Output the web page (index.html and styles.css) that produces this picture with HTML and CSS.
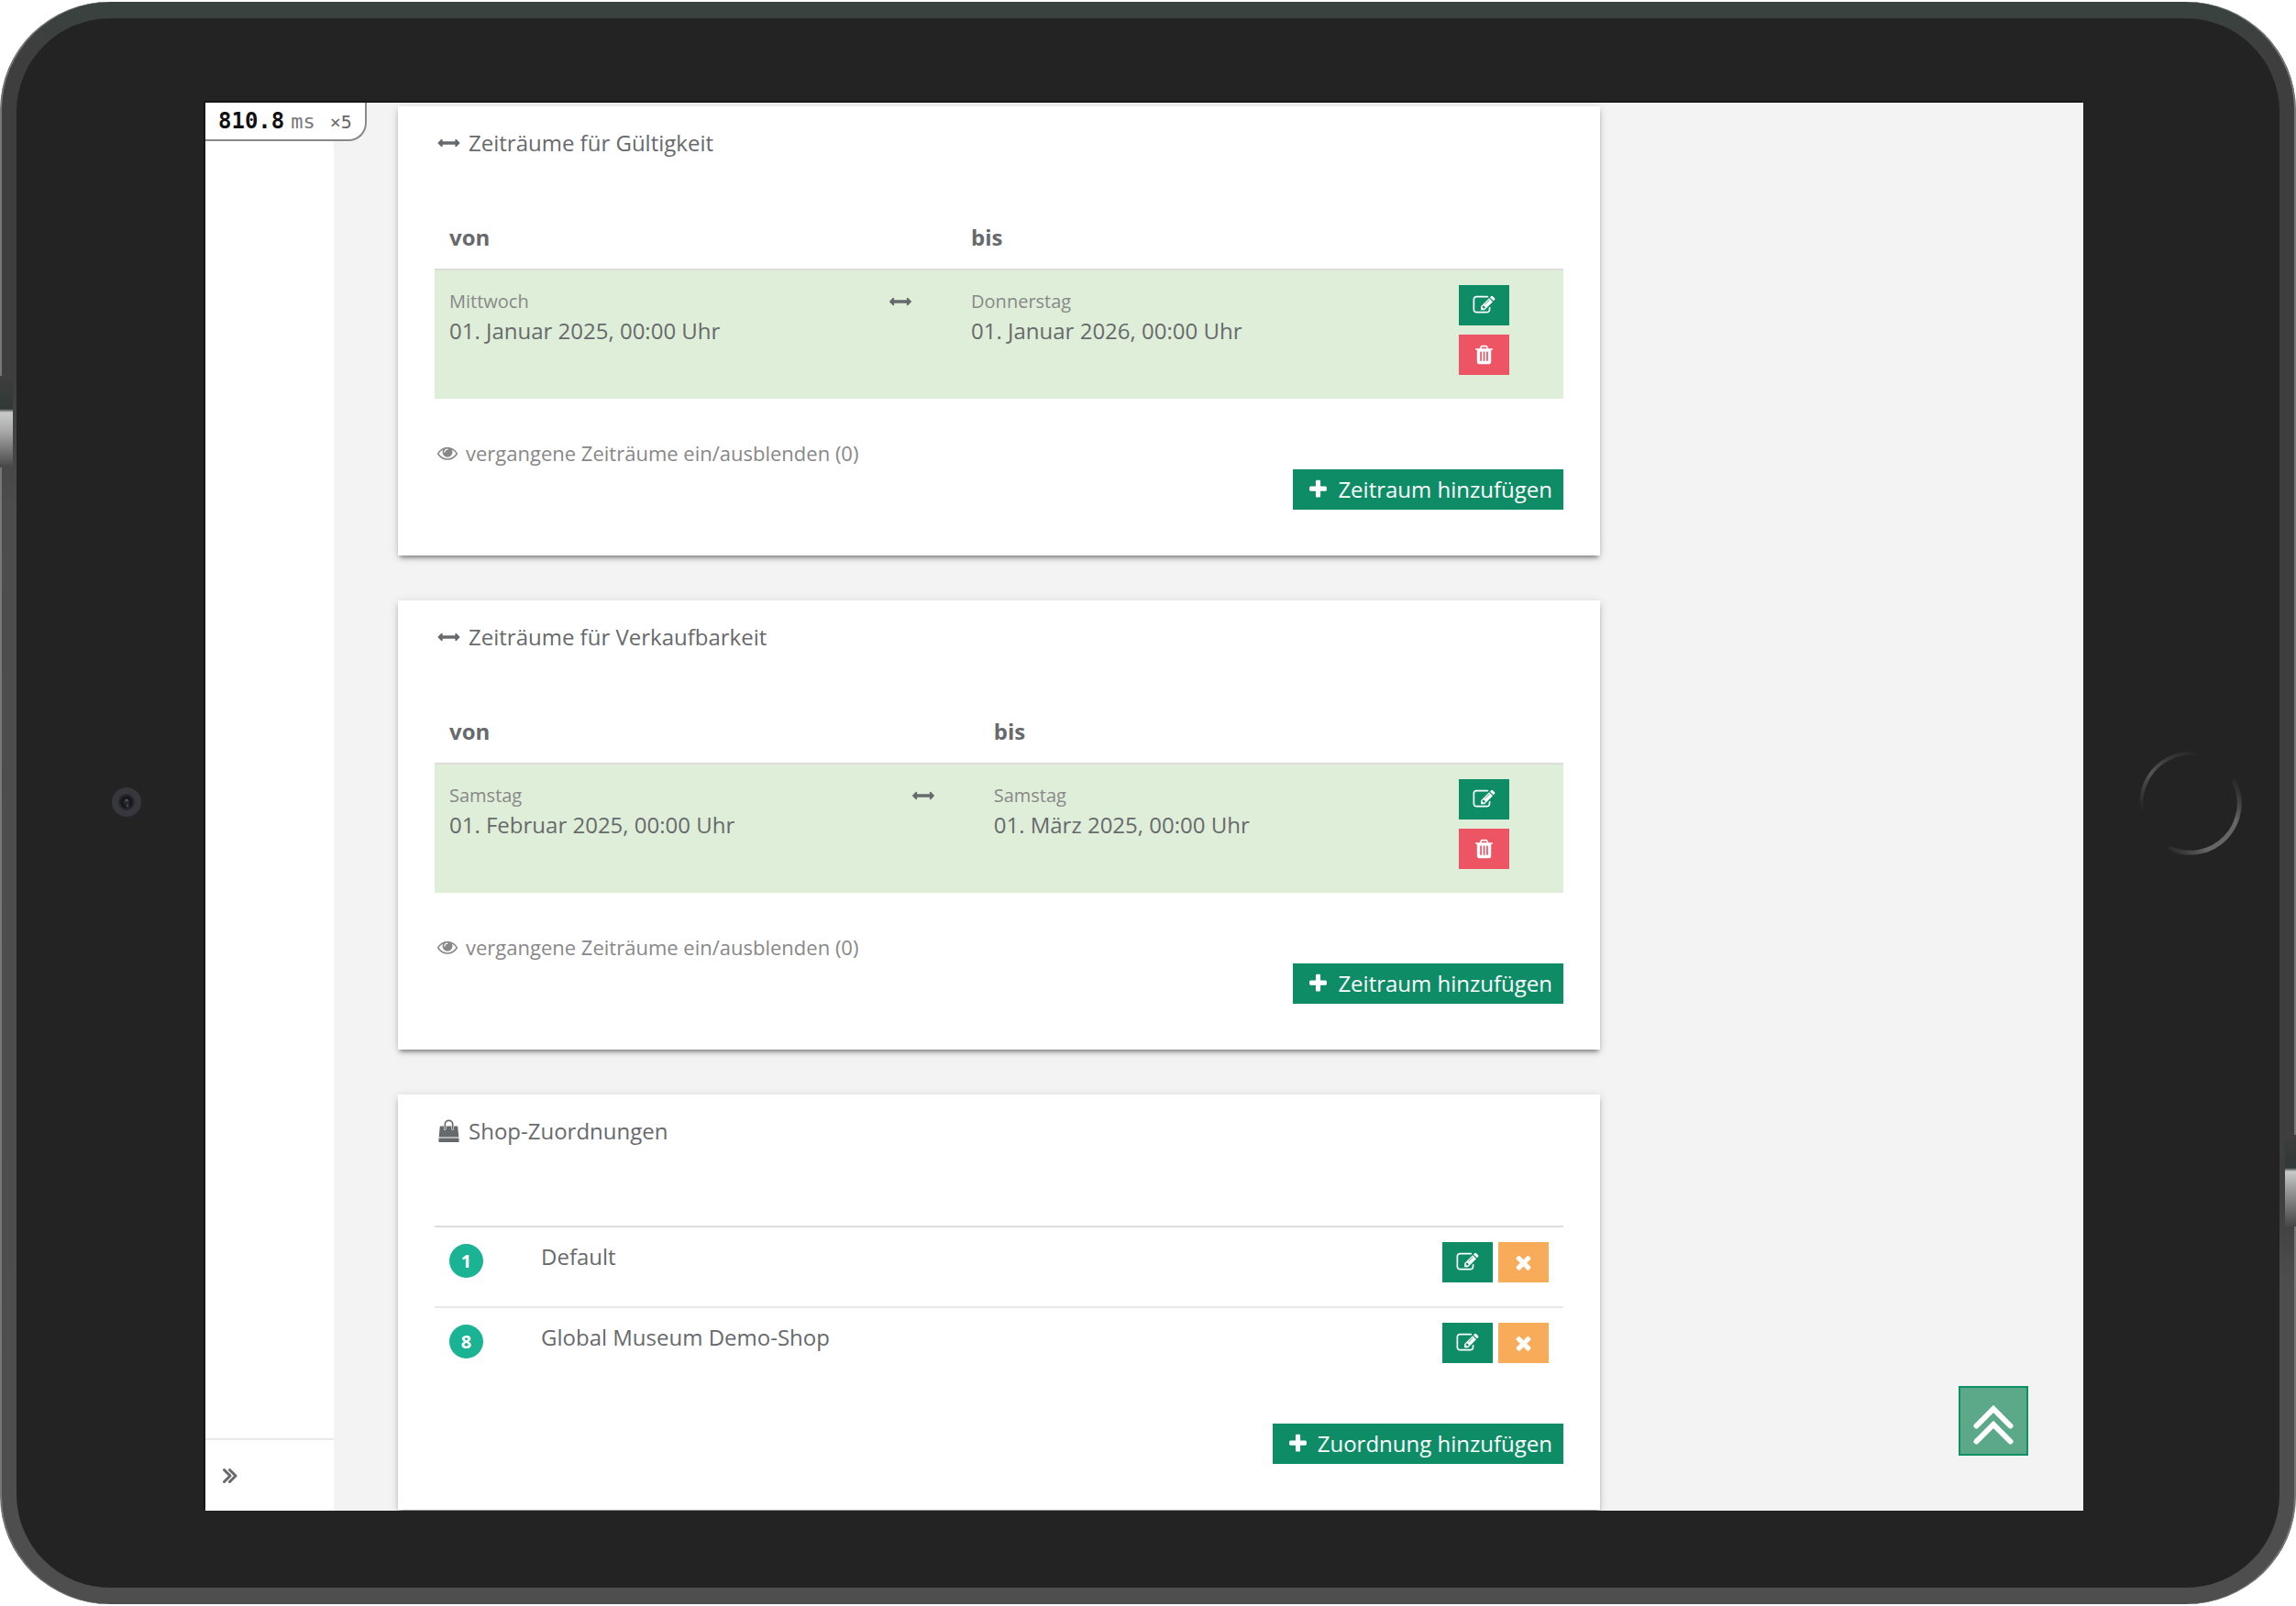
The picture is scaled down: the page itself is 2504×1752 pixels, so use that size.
FILE: index.html
```html
<!DOCTYPE html>
<html lang="de">
<head>
<meta charset="utf-8">
<meta name="viewport" content="width=device-width, initial-scale=1">
<title>Zeiträume und Shop-Zuordnungen</title>
<link rel="stylesheet" href="styles.css">
</head>
<body>
<svg class="sprite" aria-hidden="true">
  <symbol id="i-arrows" viewBox="0 0 1792 1792"><path d="M1792 896q0 26-19 45l-256 256q-19 19-45 19t-45-19-19-45v-128h-1024v128q0 26-19 45t-45 19-45-19l-256-256q-19-19-19-45t19-45l256-256q19-19 45-19t45 19 19 45v128h1024v-128q0-26 19-45t45-19 45 19l256 256q19 19 19 45z"/></symbol>
  <symbol id="i-plus" viewBox="0 0 1792 1792"><path d="M1600 736v192q0 40-28 68t-68 28h-416v416q0 40-28 68t-68 28h-192q-40 0-68-28t-28-68v-416h-416q-40 0-68-28t-28-68v-192q0-40 28-68t68-28h416v-416q0-40 28-68t68-28h192q40 0 68 28t28 68v416h416q40 0 68 28t28 68z"/></symbol>
  <symbol id="i-times" viewBox="0 0 1792 1792"><path d="M1490 1322q0 40-28 68l-136 136q-28 28-68 28t-68-28l-294-294-294 294q-28 28-68 28t-68-28l-136-136q-28-28-28-68t28-68l294-294-294-294q-28-28-28-68t28-68l136-136q28-28 68-28t68 28l294 294 294-294q28-28 68-28t68 28l136 136q28 28 28 68t-28 68l-294 294 294 294q28 28 28 68z"/></symbol>
  <symbol id="i-eye" viewBox="0 0 1792 1792"><path d="M1664 960q-152-236-381-353 61 104 61 225 0 185-131.5 316.5t-316.5 131.5-316.5-131.5-131.5-316.5q0-121 61-225-229 117-381 353 133 205 333.5 326.5t434.5 121.5 434.5-121.5 333.5-326.5zm-720-384q0-20-14-34t-34-14q-125 0-214.5 89.5t-89.5 214.5q0 20 14 34t34 14 34-14 14-34q0-86 61-147t147-61q20 0 34-14t14-34zm848 384q0 34-20 69-140 230-376.5 368.5t-499.5 138.5-499.5-139-376.5-368q-20-35-20-69t20-69q140-229 376.5-368t499.5-139 499.5 139 376.5 368q20 35 20 69z"/></symbol>
  <symbol id="i-trash" viewBox="0 0 1792 1792"><path d="M704 1376v-704q0-14-9-23t-23-9h-64q-14 0-23 9t-9 23v704q0 14 9 23t23 9h64q14 0 23-9t9-23zm256 0v-704q0-14-9-23t-23-9h-64q-14 0-23 9t-9 23v704q0 14 9 23t23 9h64q14 0 23-9t9-23zm256 0v-704q0-14-9-23t-23-9h-64q-14 0-23 9t-9 23v704q0 14 9 23t23 9h64q14 0 23-9t9-23zm-544-992h448l-48-117q-7-9-17-11h-317q-10 2-17 11zm928 32v64q0 14-9 23t-23 9h-96v948q0 83-47 143.5t-113 60.5h-832q-66 0-113-58.5t-47-141.5v-952h-96q-14 0-23-9t-9-23v-64q0-14 9-23t23-9h309l70-167q15-37 54-63t79-26h320q40 0 79 26t54 63l70 167h309q14 0 23 9t9 23z"/></symbol>
  <symbol id="i-edit" viewBox="0 0 1792 1792"><path d="M888 1184l116-116-152-152-116 116v56h96v96h56zm440-720q-16-16-33 1l-350 350q-17 17-1 33t33-1l350-350q17-17 1-33zm80 594v190q0 119-84.5 203.5t-203.5 84.5h-832q-119 0-203.5-84.5t-84.5-203.5v-832q0-119 84.5-203.5t203.5-84.5h832q63 0 117 25 15 7 18 23 3 17-9 29l-49 49q-14 14-32 8-23-6-45-6h-832q-66 0-113 47t-47 113v832q0 66 47 113t113 47h832q66 0 113-47t47-113v-126q0-13 9-22l64-64q15-15 35-7t20 29zm-96-738l288 288-672 672h-288v-288zm444 132l-92 92-288-288 92-92q28-28 68-28t68 28l152 152q28 28 28 68t-28 68z"/></symbol>
  <symbol id="i-bag" viewBox="0 0 24 28"><path d="M1.600 8h4.400v3a2 2 0 0 0 1 1.700a2 2 0 0 0 2-1.700v-3h6v3a2 2 0 0 0 2 1.700a2 2 0 0 0 1-1.700v-3h4.400l1.300 13h-23.400zM.200 22h23.600l.200 4q0 1-1 1h-22q-1 0-1-1z"/><path d="M7.500 11v-5a4.500 4.500 0 0 1 9 0v5" fill="none" stroke="currentColor" stroke-width="1.800" stroke-linecap="round"/></symbol>
</svg>

<div class="device">
  <span class="key key-left"></span>
  <span class="key key-right"></span>
  <div class="bezel">
    <div class="side-left">
      <svg class="camera" viewBox="0 0 36 36" aria-hidden="true">
        <circle cx="19" cy="19" r="16" fill="#24232a"/>
        <circle cx="17" cy="17" r="12.500" fill="#26262c" stroke="#38383c" stroke-width="7"/>
        <circle cx="17" cy="17" r="5" fill="none" stroke="#15151c" stroke-width="3"/>
        <circle cx="17" cy="15" r="1.500" fill="#555560"/><circle cx="18" cy="21" r="1.500" fill="#484852"/>
      </svg>
    </div>

    <div class="screen">
      <div class="timing"><strong>810.8</strong><span class="unit">ms</span><span class="count">×5</span></div>
      <aside class="sidebar">
        <button class="expand" type="button" aria-label="Menü ausklappen">
          <svg class="chevrons" viewBox="0 0 18 18" aria-hidden="true"><path d="M2.500 2.500L9 9l-6.500 6.500M8.500 2.500L15 9l-6.500 6.500"/></svg>
        </button>
      </aside>

      <main class="content">
        <div class="cards">
          <section class="card">
            <h2 class="card-title"><svg class="icon" aria-hidden="true"><use href="#i-arrows"/></svg>Zeiträume für Gültigkeit</h2>
            <table class="periods">
              <colgroup><col class="col-from"><col class="col-arrow"><col><col class="col-actions"></colgroup>
              <thead><tr><th>von</th><th></th><th>bis</th><th></th></tr></thead>
              <tbody>
                <tr>
                  <td><small>Mittwoch</small><br>01. Januar 2025, 00:00 Uhr</td>
                  <td><svg class="span-icon" aria-hidden="true"><use href="#i-arrows"/></svg></td>
                  <td><small>Donnerstag</small><br>01. Januar 2026, 00:00 Uhr</td>
                  <td><div class="actions stacked">
                    <button class="btn" type="button" aria-label="Bearbeiten"><svg class="icon" aria-hidden="true"><use href="#i-edit"/></svg></button>
                    <button class="btn danger" type="button" aria-label="Löschen"><svg class="icon" aria-hidden="true"><use href="#i-trash"/></svg></button>
                  </div></td>
                </tr>
              </tbody>
            </table>
            <a class="toggle" href="#"><svg class="icon" aria-hidden="true"><use href="#i-eye"/></svg>vergangene Zeiträume ein/ausblenden (0)</a>
            <button class="btn add" type="button"><svg class="icon" aria-hidden="true"><use href="#i-plus"/></svg>Zeitraum hinzufügen</button>
          </section>

          <section class="card">
            <h2 class="card-title"><svg class="icon" aria-hidden="true"><use href="#i-arrows"/></svg>Zeiträume für Verkaufbarkeit</h2>
            <table class="periods">
              <colgroup><col class="col-from-wide"><col class="col-arrow"><col><col class="col-actions"></colgroup>
              <thead><tr><th>von</th><th></th><th>bis</th><th></th></tr></thead>
              <tbody>
                <tr>
                  <td><small>Samstag</small><br>01. Februar 2025, 00:00 Uhr</td>
                  <td><svg class="span-icon" aria-hidden="true"><use href="#i-arrows"/></svg></td>
                  <td><small>Samstag</small><br>01. März 2025, 00:00 Uhr</td>
                  <td><div class="actions stacked">
                    <button class="btn" type="button" aria-label="Bearbeiten"><svg class="icon" aria-hidden="true"><use href="#i-edit"/></svg></button>
                    <button class="btn danger" type="button" aria-label="Löschen"><svg class="icon" aria-hidden="true"><use href="#i-trash"/></svg></button>
                  </div></td>
                </tr>
              </tbody>
            </table>
            <a class="toggle" href="#"><svg class="icon" aria-hidden="true"><use href="#i-eye"/></svg>vergangene Zeiträume ein/ausblenden (0)</a>
            <button class="btn add" type="button"><svg class="icon" aria-hidden="true"><use href="#i-plus"/></svg>Zeitraum hinzufügen</button>
          </section>

          <section class="card">
            <h2 class="card-title"><svg class="icon bag" aria-hidden="true"><use href="#i-bag"/></svg>Shop-Zuordnungen</h2>
            <table class="shops">
              <colgroup><col class="col-id"><col><col class="col-shop-actions"></colgroup>
              <tbody>
                <tr>
                  <td><span class="badge">1</span></td>
                  <td>Default</td>
                  <td><div class="actions">
                    <button class="btn" type="button" aria-label="Bearbeiten"><svg class="icon" aria-hidden="true"><use href="#i-edit"/></svg></button>
                    <button class="btn warning" type="button" aria-label="Entfernen"><svg class="icon" aria-hidden="true"><use href="#i-times"/></svg></button>
                  </div></td>
                </tr>
                <tr>
                  <td><span class="badge">8</span></td>
                  <td>Global Museum Demo-Shop</td>
                  <td><div class="actions">
                    <button class="btn" type="button" aria-label="Bearbeiten"><svg class="icon" aria-hidden="true"><use href="#i-edit"/></svg></button>
                    <button class="btn warning" type="button" aria-label="Entfernen"><svg class="icon" aria-hidden="true"><use href="#i-times"/></svg></button>
                  </div></td>
                </tr>
              </tbody>
            </table>
            <button class="btn add" type="button"><svg class="icon" aria-hidden="true"><use href="#i-plus"/></svg>Zuordnung hinzufügen</button>
          </section>
        </div>
      </main>

      <button class="to-top" type="button" aria-label="Nach oben">
        <svg viewBox="0 0 72 72" aria-hidden="true"><path d="M17.500 41.500L36 23l18.500 18.500M17.500 58.500L36 40l18.500 18.500"/></svg>
      </button>
    </div>

    <div class="side-right">
      <svg class="home" viewBox="0 0 112 116" aria-hidden="true">
        <defs>
          <linearGradient id="rim-top" x1="0" y1="1" x2="1" y2="0"><stop offset="0" stop-color="#555" stop-opacity="0"/><stop offset=".4" stop-color="#555"/><stop offset="1" stop-color="#444" stop-opacity="0"/></linearGradient>
          <linearGradient id="rim-bottom" x1="0" y1="1" x2="1" y2="0"><stop offset="0" stop-color="#666" stop-opacity="0"/><stop offset=".3" stop-color="#666"/><stop offset=".7" stop-color="#666"/><stop offset="1" stop-color="#555" stop-opacity="0"/></linearGradient>
        </defs>
        <path d="M3 66A54 54 0 0 1 68 5" fill="none" stroke="url(#rim-top)" stroke-width="4"/>
        <path d="M32 107A54 54 0 0 0 103 33" fill="none" stroke="url(#rim-bottom)" stroke-width="5"/>
      </svg>
    </div>
  </div>
</div>
</body>
</html>
```
FILE: styles.css
```css
* { box-sizing: border-box; }

body {
  margin: 0;
  background: #fff;
  color: #676a6c;
  font: 24px/32px "Open Sans", "Noto Sans", sans-serif;
}

.sprite { position: absolute; width: 0; height: 0; }

/* Tablet body: the right rim stays dark further down than the left one */
.device {
  position: relative;
  display: flex;
  min-height: 100vh;
  padding: 18px;
  border: solid transparent;
  border-width: 2px 0;
  border-radius: 120px;
  background:
    linear-gradient(#3a423f 18px, #3e3e3e 60px, #3e3e3e 75%, #4e4e4e 80%) right / 20px 100% no-repeat padding-box,
    linear-gradient(#3a423f 18px, #3e3e3e 60px, #3e3e3e 24%, #4d4d4d 32%, #4e4e4e) padding-box;
  box-shadow: inset 2px 0 0 #777, inset -2px 0 0 #777;
  overflow: hidden;
}

.bezel {
  flex: 1;
  display: grid;
  grid-template-columns: 206px minmax(0, 1fr) 214px;
  border-radius: 102px;
  background: #232323;
}

.side-left, .side-right { display: flex; align-items: center; }
.side-left { justify-content: center; padding-left: 36px; }
.side-right { justify-content: center; padding-left: 20px; }
.camera { width: 36px; height: 36px; }
.home { width: 112px; height: 116px; }

.key { position: absolute; width: 14px; height: 100px; }
.key-left { left: 0; top: 408px; background: linear-gradient(#3e3e3e, #303836 36px, #c8caca 40px, #aaa 60px, #464646); }
.key-right { right: 0; top: 1236px; width: 12px; background: linear-gradient(#3e3e3e, #303836 36px, #c8caca 40px, #999 60px, #464646); }

.screen {
  position: relative;
  display: flex;
  margin: 92px 0 84px;
  background: #f3f3f3;
  box-shadow: -2px -2px 0 #161616;
}

.timing {
  position: absolute;
  z-index: 2;
  top: 0;
  left: 0;
  display: flex;
  align-items: baseline;
  height: 42px;
  padding: 4px 14px;
  border: solid #888;
  border-width: 0 2px 2px 0;
  border-radius: 0 0 20px 0;
  background: #fff;
  color: #777;
  font: 22px/32px "DejaVu Sans Mono", monospace;
}
.timing strong { color: #111; font-size: 24px; }
.timing .unit { margin-left: 7px; }
.timing .count { margin-left: 16px; color: #666; font-size: 20px; }

.sidebar {
  display: flex;
  flex-direction: column;
  justify-content: flex-end;
  flex: 0 0 140px;
  background: #fff;
}
.expand {
  display: flex;
  align-items: center;
  height: 79px;
  padding: 0 18px;
  border: 0;
  border-top: 2px solid #e7eaec;
  background: none;
}
.chevrons { width: 18px; height: 18px; }
.chevrons path { fill: none; stroke: #676a6c; stroke-width: 3; stroke-linecap: round; stroke-linejoin: round; }

.content {
  flex: 1;
  display: grid;
  grid-template-columns: minmax(0, 3fr) minmax(0, 1fr);
  min-width: 0;
  padding: 4px 90px 0 70px;
  overflow: hidden;
}
.cards { display: flex; flex-direction: column; gap: 49px; }

.card {
  display: flex;
  flex-direction: column;
  padding: 22px 40px 50px;
  background: #fff;
  box-shadow: 0 4px 5px -2px rgba(0, 0, 0, .45), 0 2px 10px rgba(0, 0, 0, .14);
}

.card-title {
  display: flex;
  align-items: center;
  gap: 6px;
  margin: 0 0 53px;
  font-size: 24px;
  line-height: 36px;
  font-weight: 400;
}

.icon { flex: none; width: 31px; height: 24px; fill: currentColor; }
.icon.bag { height: 26px; }

table { width: 100%; table-layout: fixed; border-spacing: 0; }
th, td { padding: 16px; text-align: left; vertical-align: top; }
th { padding-bottom: 18px; border-bottom: 2px solid #ddd; font-weight: 700; }
small { font-size: 20px; color: #888; }

.col-from { width: 39%; }
.col-from-wide { width: 41%; }
.col-arrow { width: 89px; }
.col-actions { width: 130px; }
.col-id { width: 100px; }
.col-shop-actions { width: 148px; }

.periods { margin-bottom: 43px; }
.periods tbody td { background: #dfeed8; }
.span-icon { display: block; width: 24px; height: 24px; margin-top: 6px; fill: currentColor; }

.shops { margin: 32px 0 40px; }
.shops td { border-top: 2px solid #e7eaec; }
.shops tr:first-child td { border-top-color: #ddd; }

.badge {
  display: flex;
  align-items: center;
  justify-content: center;
  width: 37px;
  height: 37px;
  margin-top: 2px;
  border-radius: 50%;
  background: #1ab394;
  color: #fff;
  font-size: 20px;
  font-weight: 700;
}

.actions { display: flex; gap: 6px; padding-bottom: 10px; }
.actions.stacked { flex-direction: column; align-items: flex-start; gap: 10px; }

.btn {
  display: flex;
  align-items: center;
  gap: 6px;
  height: 44px;
  padding: 0 12px;
  border: 0;
  border-radius: 0;
  background: #0e8c66;
  color: #fff;
  font: inherit;
}
.btn.danger { background: #ed5565; }
.btn.warning { background: #f8ac59; }
.btn.add { align-self: flex-end; }

.toggle {
  display: flex;
  align-items: center;
  align-self: flex-start;
  gap: 6px;
  margin-bottom: 2px;
  color: #888;
  font-size: 22px;
  text-decoration: none;
}
.toggle .icon { width: 28px; height: 22px; }

.to-top {
  position: absolute;
  right: 60px;
  bottom: 60px;
  width: 76px;
  height: 76px;
  padding: 0;
  border: 2px solid #0e8f66;
  background: #5ca98a;
}
.to-top svg { display: block; width: 72px; height: 72px; }
.to-top path { fill: none; stroke: #fff; stroke-width: 6; stroke-linecap: round; }
```
